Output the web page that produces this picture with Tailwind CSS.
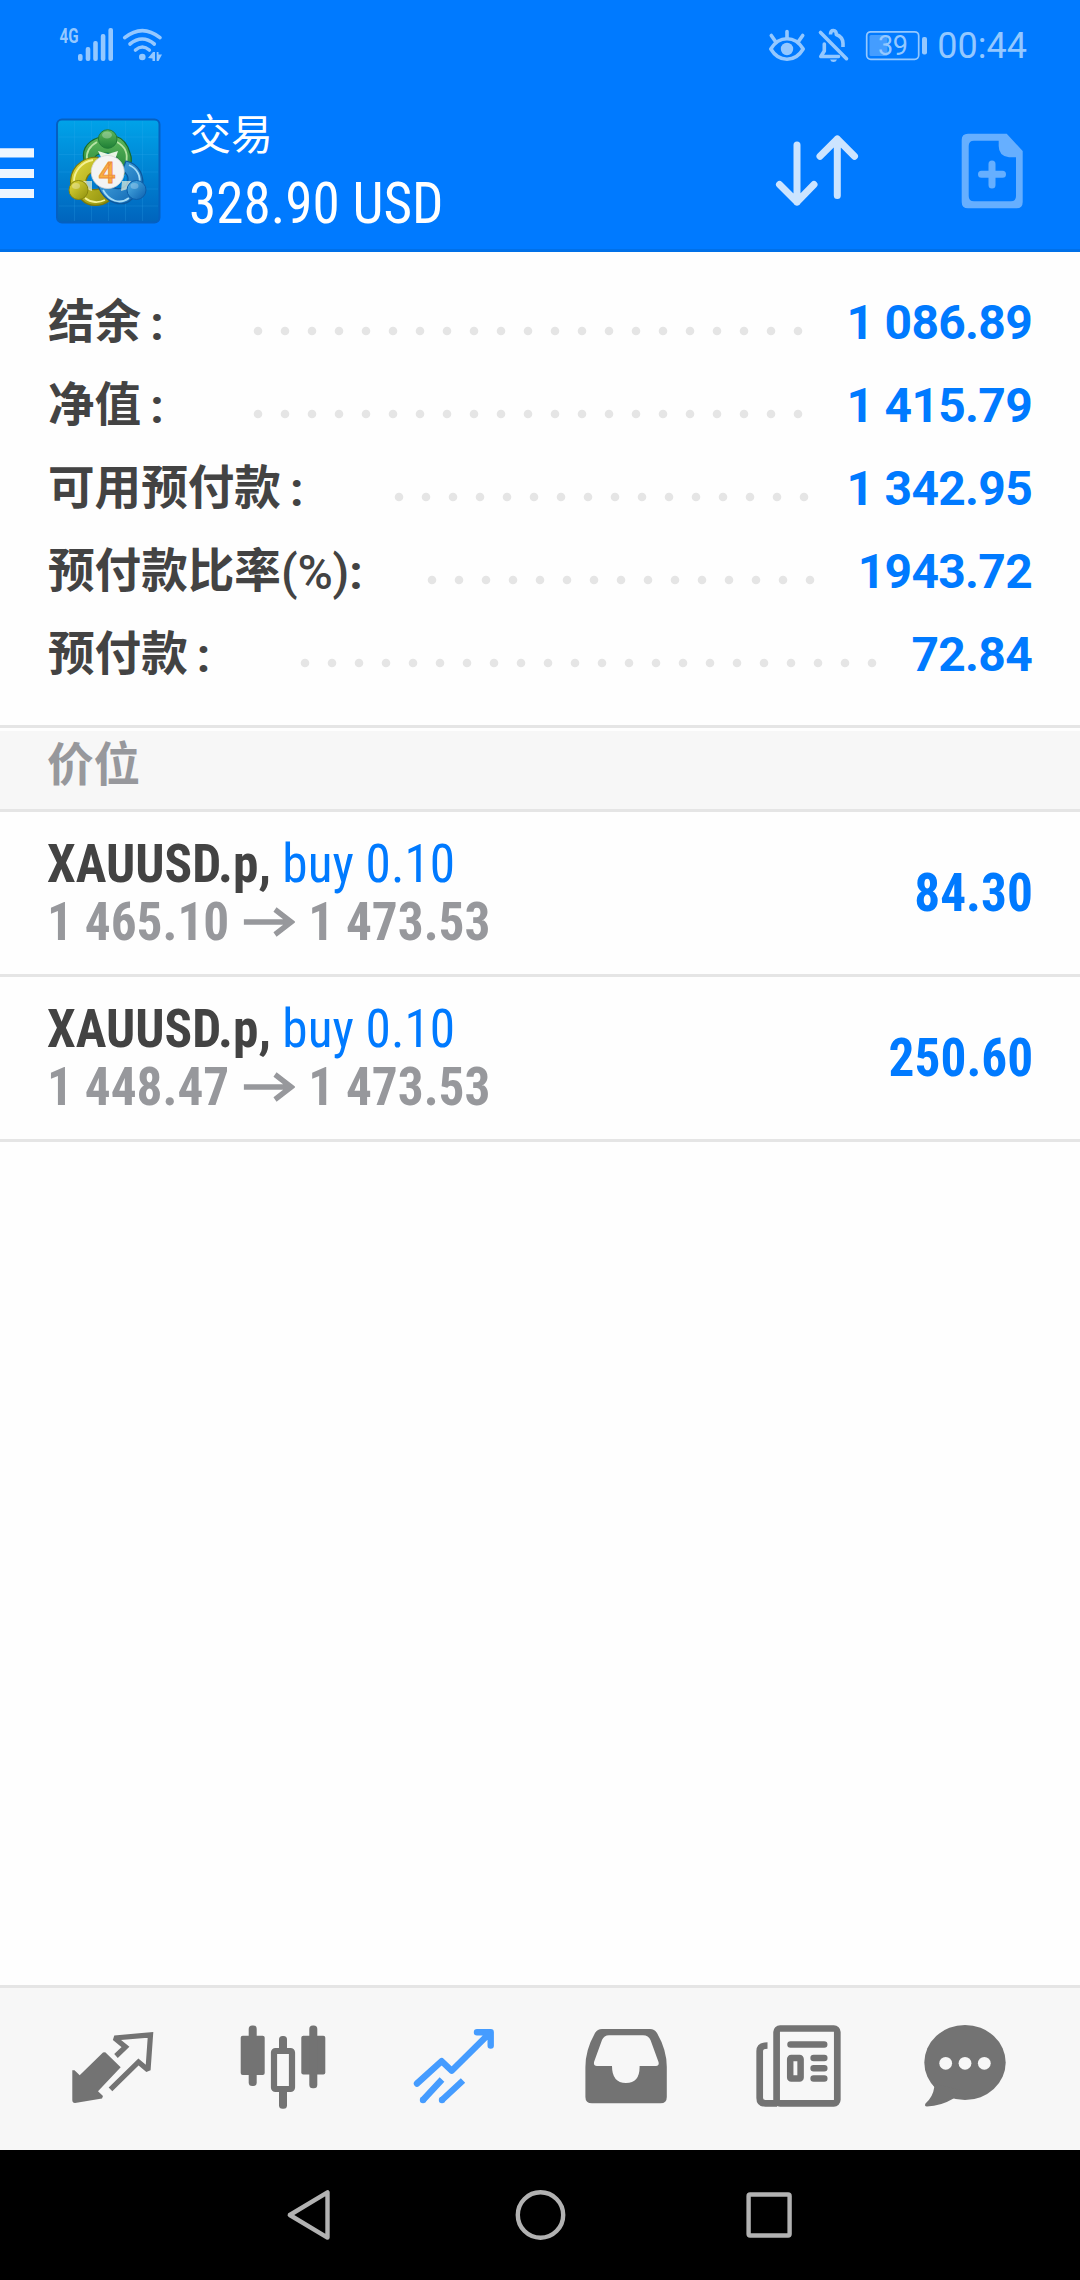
<!DOCTYPE html>
<html lang="zh-CN">
<head>
  <meta charset="UTF-8">
  <meta name="viewport" content="width=device-width, initial-scale=1.0">
  <title>交易</title>
  <script src="https://cdn.jsdelivr.net/npm/@tailwindcss/browser@4"></script>
</head>
<body class="bg-[#fefefe] font-['Roboto','Noto_Sans_CJK_SC',sans-serif] w-[1080px] h-[2280px] flex flex-col overflow-hidden">

  <!-- Header -->
  <header class="bg-[#007aff] h-[252px] border-b-3 border-[#0070e8] flex flex-col shrink-0">

    <!-- Status bar -->
    <div class="h-[92px] flex items-center text-[#94c8ff]">
      <svg class="w-[170px] h-[92px]" viewBox="0 0 170 92" fill="currentColor">
        <text x="59.5" y="43" font-size="21" font-weight="700" textLength="19" lengthAdjust="spacingAndGlyphs">4G</text>
        <rect x="78" y="54" width="4.6" height="7" rx="2"/>
        <rect x="85.7" y="47" width="4.6" height="14" rx="2"/>
        <rect x="93.2" y="41" width="4.6" height="20" rx="2"/>
        <rect x="100.8" y="34" width="4.6" height="27" rx="2"/>
        <rect x="108.4" y="28" width="4.6" height="33" rx="2"/>
        <g fill="none" stroke="currentColor" stroke-width="3.6" stroke-linecap="round">
          <path d="M124.7 37.7Q142.3 23.5 160 37.7"/>
          <path d="M130 44Q142.3 34 154.3 44"/>
          <path d="M135.5 50Q142.3 44 149.3 50"/>
        </g>
        <circle cx="142.3" cy="57" r="3.3"/>
        <path d="M148 58L153 52H155V61H152.5V58.5ZM156.7 52H158.5V54.5H162L158.5 61H156.7Z"/>
      </svg>
      <svg class="w-[168px] h-[92px] ml-auto" viewBox="763 0 168 92" fill="none" stroke="currentColor" stroke-width="3.6" stroke-linecap="round" stroke-linejoin="round">
        <path d="M770.8 49Q777 38.8 787 38.8T803.2 49Q797 59.3 787 59.3T770.8 49Z"/>
        <circle cx="787" cy="49" r="6.2" fill="currentColor" stroke="none"/>
        <path d="M787 31.5V38M771.3 35.5L775.5 41.5M802.7 35.5L798.5 41.5"/>
        <path d="M820.5 32.5L846.5 58.7"/>
        <path d="M824.3 44V51L820.8 56.5H838.5"/>
        <path d="M830.5 34.5Q830.5 30.5 833.4 30.5T836.3 34.5Q843 37 843 43.5V47" stroke-linecap="butt"/>
        <path d="M830 59.5H837Q836 62 833.5 62T830 59.5Z" fill="currentColor" stroke="none"/>
        <rect x="866.7" y="31.8" width="52" height="27.5" rx="4" stroke-width="1.7"/>
        <rect x="869.5" y="35" width="18" height="21" rx="1.5" fill="#449dff" stroke="none"/>
        <rect x="922" y="37" width="5" height="17.5" rx="2" fill="currentColor" stroke="none"/>
        <text x="878" y="55" font-size="27" fill="currentColor" stroke="none" textLength="30">39</text>
      </svg>
      <div class="text-[36px] leading-none ml-[6px] mr-[53px]">00:44</div>
    </div>

    <!-- Title bar -->
    <div class="flex h-[157px]">
      <svg class="w-[168px] h-[157px]" viewBox="0 92 168 157">
        <defs>
          <linearGradient id="tile" x1="0" y1="0" x2="0" y2="1">
            <stop offset="0" stop-color="#00a3e9"/>
            <stop offset="1" stop-color="#0064bd"/>
          </linearGradient>
          <linearGradient id="green" x1="0" y1="0" x2="0" y2="1">
            <stop offset="0" stop-color="#5fb95c"/>
            <stop offset="1" stop-color="#1e7f35"/>
          </linearGradient>
          <linearGradient id="yellow" x1="0" y1="0" x2="1" y2="1">
            <stop offset="0" stop-color="#e6dc3c"/>
            <stop offset="1" stop-color="#8d8f0c"/>
          </linearGradient>
          <linearGradient id="blue" x1="0" y1="0" x2="1" y2="1">
            <stop offset="0" stop-color="#52b4e8"/>
            <stop offset="1" stop-color="#0a5fae"/>
          </linearGradient>
        </defs>
        <path d="M0 148.3H34V157.5H0ZM0 169H34V178H0ZM0 189H34V198H0Z" fill="#eef6ff"/>
        <rect x="57" y="119.5" width="102.5" height="103" rx="5" fill="url(#tile)" stroke="#0560c0" stroke-width="2"/>
        <path d="M74.5 121V221M91.5 121V221M108.5 121V221M125.5 121V221M142.5 121V221M59 137H158M59 154.5H158M59 172H158M59 189H158M59 206H158" stroke="#35aef0" stroke-opacity=".2" fill="none"/>
        <!-- three figures -->
        <path d="M100 137C84 142 81 153 85 163L96 167C92 157 95 153 107 153C118 153 122 163 116 177C128 176 134 163 130 153C127 142 122 138 115 136Z" fill="url(#green)" stroke="#176a2c" stroke-width="1.2"/>
        <path d="M97 142C88 147 86 153 87 160M117 142C126 147 128 155 126 163" stroke="#b6e3a4" stroke-width="1.8" fill="none"/>
        <path d="M98 157C80 157 68 170 71 187L82 200C88 207 101 207 109 201L104 187C92 193 86 188 86 180C88 173 94 171 98 171Z" fill="url(#yellow)" stroke="#7b780b" stroke-width="1.2"/>
        <path d="M93 160C81 162 74 172 74 181M85 198C91 203 99 203 105 200" stroke="#f4f193" stroke-width="1.8" fill="none"/>
        <path d="M126 161C140 164 145 177 142 189L132 199C123 208 105 204 98 186L109 185C114 190 124 190 127 184C130 177 126 172 122 171Z" fill="url(#blue)" stroke="#0b579d" stroke-width="1.2"/>
        <path d="M129 165C138 169 141 177 139 184M103 190C109 201 120 205 129 198" stroke="#a5dcf7" stroke-width="1.8" fill="none"/>
        <path d="M83 181L92 181V191L86 189ZM122 181L131 181L128 189L121 191Z" fill="#e9f2dc" fill-opacity=".7"/>
        <path d="M98 151L108 154L118 151L116 157H101Z" fill="#e9f5e4"/>
        <circle cx="107.7" cy="139" r="9.3" fill="url(#green)" stroke="#227c38"/>
        <circle cx="78.5" cy="190" r="9.5" fill="url(#yellow)" stroke="#86850e"/>
        <circle cx="136.5" cy="190" r="9.5" fill="url(#blue)" stroke="#0c5ca8"/>
        <ellipse cx="107" cy="135" rx="5" ry="3.5" fill="#fff" fill-opacity=".28"/>
        <ellipse cx="76" cy="186" rx="4" ry="3" fill="#fff" fill-opacity=".3"/>
        <ellipse cx="134.5" cy="186" rx="4" ry="3" fill="#fff" fill-opacity=".25"/>
        <circle cx="107.7" cy="172" r="16.5" fill="#f4f4f4" stroke="#d5d5d5" stroke-width=".8"/>
        <text x="107" y="182.5" font-size="30" font-weight="500" text-anchor="middle" fill="#fbb040" stroke="#ea8a3c" stroke-width=".8">4</text>
      </svg>
      <div class="flex flex-col text-white pl-[21px] pt-[23px]">
        <div class="text-[42px] leading-[42px]">交易</div>
        <div class="text-[57.5px] leading-[66px] mt-[14px] font-['Roboto_Condensed','Roboto',sans-serif] font-stretch-condensed whitespace-nowrap origin-left scale-x-[0.96]">328.90 USD</div>
      </div>
      <div class="flex ml-auto">
        <svg class="w-[90px] h-[157px]" viewBox="772 92 90 157" fill="none" stroke="#cce4ff" stroke-width="7" stroke-linecap="round" stroke-linejoin="round">
          <path d="M797 145V202M779.5 184.5L797 202L814 184.5"/>
          <path d="M837.3 195.5V139M820 156.3L837.3 139L854.5 156.3"/>
        </svg>
        <svg class="w-[80px] h-[157px] ml-[90px] mr-[48px]" viewBox="952 92 80 157" fill="#66afff">
          <path fill-rule="evenodd" d="M968 133.7H1006.7L1022.7 151V202Q1022.7 208.3 1016.5 208.3H968Q961.7 208.3 961.7 202V140Q961.7 133.7 968 133.7ZM974 140.7Q968.7 140.7 968.7 146V196Q968.7 201.3 974 201.3H1011Q1016 201.3 1016 196V157.3H1009Q998.7 156 998.7 146V140.7Z"/>
          <path d="M992 164V185M981.5 174.3H1002.5" stroke="#66afff" stroke-width="7" stroke-linecap="round"/>
        </svg>
      </div>
    </div>
  </header>

  <!-- Account summary -->
  <section class="h-[476px] shrink-0 pt-[29px] px-[48px] border-b-3 border-[#e5e5e5] text-[#434343] text-[46.6px] font-bold">
    <div class="flex items-center h-[83px]">
      <div class="w-[205px] flex pt-[3px]"><span>结余</span><span class="ml-[9px] text-[48px]">:</span></div>
      <svg class="w-[550px] h-[10px] mt-[17px]" viewBox="0 0 550 10"><path d="M5 5H546" stroke="#e5e5e5" stroke-width="8.6" stroke-linecap="round" stroke-dasharray="0 27"/></svg>
      <div class="ml-auto text-[48px] tracking-[-0.7px] text-[#007aff] whitespace-nowrap">1 086.89</div>
    </div>
    <div class="flex items-center h-[83px]">
      <div class="w-[205px] flex pt-[3px]"><span>净值</span><span class="ml-[9px] text-[48px]">:</span></div>
      <svg class="w-[550px] h-[10px] mt-[17px]" viewBox="0 0 550 10"><path d="M5 5H546" stroke="#e5e5e5" stroke-width="8.6" stroke-linecap="round" stroke-dasharray="0 27"/></svg>
      <div class="ml-auto text-[48px] tracking-[-0.7px] text-[#007aff] whitespace-nowrap">1 415.79</div>
    </div>
    <div class="flex items-center h-[83px]">
      <div class="w-[346px] flex pt-[3px]"><span>可用预付款</span><span class="ml-[9px] text-[48px]">:</span></div>
      <svg class="w-[415px] h-[10px] mt-[17px]" viewBox="0 0 415 10"><path d="M5 5H411" stroke="#e5e5e5" stroke-width="8.6" stroke-linecap="round" stroke-dasharray="0 27"/></svg>
      <div class="ml-auto text-[48px] tracking-[-0.7px] text-[#007aff] whitespace-nowrap">1 342.95</div>
    </div>
    <div class="flex items-center h-[83px]">
      <div class="w-[379px] flex pt-[3px] whitespace-nowrap"><span>预付款比率</span><span class="text-[48px] font-medium tracking-[-0.2px]">(%)</span><span class="text-[48px]">:</span></div>
      <svg class="w-[388px] h-[10px] mt-[17px]" viewBox="0 0 388 10"><path d="M5 5H384" stroke="#e5e5e5" stroke-width="8.6" stroke-linecap="round" stroke-dasharray="0 27"/></svg>
      <div class="ml-auto text-[48px] tracking-[-0.7px] text-[#007aff] whitespace-nowrap">1943.72</div>
    </div>
    <div class="flex items-center h-[83px]">
      <div class="w-[252px] flex pt-[3px]"><span>预付款</span><span class="ml-[9px] text-[48px]">:</span></div>
      <svg class="w-[577px] h-[10px] mt-[17px]" viewBox="0 0 577 10"><path d="M5 5H573" stroke="#e5e5e5" stroke-width="8.6" stroke-linecap="round" stroke-dasharray="0 27"/></svg>
      <div class="ml-auto text-[48px] tracking-[-0.7px] text-[#007aff] whitespace-nowrap">72.84</div>
    </div>
  </section>

  <!-- Positions -->
  <div class="mt-[3px] h-[81px] shrink-0 bg-[#f7f7f7] border-b-3 border-[#e5e5e5] pl-[47px] text-[46.6px] leading-[69px] font-bold text-[#97989c]">价位</div>

  <div class="h-[165px] shrink-0 border-b-3 border-[#e5e5e5] pl-[47px] pr-[47px] flex items-center font-['Roboto_Condensed','Roboto',sans-serif] font-stretch-condensed text-[54px] leading-[58px] whitespace-nowrap">
    <div class="origin-left scale-x-[0.95]">
      <div class="flex gap-[12px]"><span class="font-bold text-[#434343]">XAUUSD.p,</span><span class="text-[#007aff]">buy 0.10</span></div>
      <div class="flex items-center font-bold text-[#97989c]">
        <span>1 465.10</span>
        <svg class="w-[54px] h-[30px] ml-[15px] mr-[14px]" viewBox="0 0 54 30" fill="none" stroke="currentColor" stroke-width="5.5"><path d="M0 15H50M33 2.5L50 15L33 27.5"/></svg>
        <span>1 473.53</span>
      </div>
    </div>
    <div class="ml-auto font-bold text-[#007aff] origin-right scale-x-[0.95]">84.30</div>
  </div>
  <div class="h-[165px] shrink-0 border-b-3 border-[#e5e5e5] pl-[47px] pr-[47px] flex items-center font-['Roboto_Condensed','Roboto',sans-serif] font-stretch-condensed text-[54px] leading-[58px] whitespace-nowrap">
    <div class="origin-left scale-x-[0.95]">
      <div class="flex gap-[12px]"><span class="font-bold text-[#434343]">XAUUSD.p,</span><span class="text-[#007aff]">buy 0.10</span></div>
      <div class="flex items-center font-bold text-[#97989c]">
        <span>1 448.47</span>
        <svg class="w-[54px] h-[30px] ml-[15px] mr-[14px]" viewBox="0 0 54 30" fill="none" stroke="currentColor" stroke-width="5.5"><path d="M0 15H50M33 2.5L50 15L33 27.5"/></svg>
        <span>1 473.53</span>
      </div>
    </div>
    <div class="ml-auto font-bold text-[#007aff] origin-right scale-x-[0.95]">250.60</div>
  </div>

  <!-- Tab bar -->
  <nav class="mt-auto h-[165px] shrink-0 bg-[#f7f7f7] border-t-3 border-[#e5e5e5] px-[27px] grid grid-cols-6 justify-items-center text-[#737373]">
    <svg class="w-[101px] h-[162px]" viewBox="62 1988 101 162" fill="currentColor">
      <path d="M105 2052L120.7 2067.3L98 2091.3L103 2096L102 2098.5L75 2103Q72.3 2103 72.3 2100V2070.3L74.5 2070.3L79.7 2075.3L103 2052.5Q105 2051.5 107 2053.5Z"/>
      <path d="M116 2056L125.5 2047L114.5 2038L150.5 2034.8L148 2070L138.5 2062L110.5 2089.3" fill="none" stroke="currentColor" stroke-width="5.2" stroke-miterlimit="2"/>
    </svg>
    <svg class="w-[101px] h-[162px]" viewBox="233 1988 101 162" fill="currentColor">
      <rect x="240.7" y="2035.7" width="24" height="39.3" rx="2"/>
      <rect x="248.7" y="2025.5" width="8" height="60.5" rx="3.5"/>
      <rect x="301.3" y="2035.7" width="24" height="38.8" rx="2"/>
      <rect x="309.3" y="2025.5" width="8" height="62.8" rx="3.5"/>
      <rect x="279" y="2036" width="8" height="18" rx="3.5"/>
      <rect x="279" y="2087" width="8" height="21.7" rx="3.5"/>
      <rect x="274" y="2051" width="18" height="38" rx="1.5" fill="none" stroke="currentColor" stroke-width="6.2"/>
    </svg>
    <svg class="w-[101px] h-[162px]" viewBox="404 1988 101 162" fill="none" stroke="#459cff" stroke-width="6.4">
      <path d="M417 2083.5L441.7 2061.2L451.7 2070.7L490.3 2032.5M477 2032.3H490.7V2045.5" stroke-linecap="round" stroke-linejoin="round"/>
      <path d="M423 2100L442 2079.5M442 2100L463 2080.5"/>
      <g fill="#459cff" stroke="none"><circle cx="423" cy="2100" r="3.2"/><circle cx="442" cy="2100" r="3.2"/></g>
    </svg>
    <svg class="w-[101px] h-[162px]" viewBox="575 1988 101 162" fill="currentColor">
      <path fill-rule="evenodd" d="M602 2029H650Q654.5 2029 657 2033Q666.8 2050 666.8 2067V2097Q666.8 2103.3 660.5 2103.3H592Q585.4 2103.3 585.4 2097V2067Q585.4 2050 595 2033Q597.5 2029 602 2029ZM609 2035.3Q604 2035.3 602 2040L594.2 2061.5Q593 2066 597 2066H612Q612 2083 626 2083T639.6 2066H656Q659.5 2066 658.5 2062L650.5 2040Q648.5 2035.3 643 2035.3Z"/>
    </svg>
    <svg class="w-[101px] h-[162px]" viewBox="746 1988 101 162" fill="none" stroke="currentColor" stroke-width="6.7">
      <rect x="776.6" y="2028.5" width="60.7" height="74.8" rx="3.5"/>
      <path d="M767.5 2045.5Q759.7 2045.5 759.7 2051V2098Q759.7 2103.4 765.5 2103.4H777"/>
      <rect x="790.2" y="2058" width="10.4" height="20.5" rx="1" stroke-width="6.5"/>
      <path d="M790.5 2044.5H824.2M813.6 2058H824.3M813.6 2068.2H824.3M813.6 2078.4H824.3" stroke-linecap="round" stroke-width="6.5"/>
    </svg>
    <svg class="w-[101px] h-[162px]" viewBox="917 1988 101 162" fill="currentColor">
      <ellipse cx="965" cy="2062.5" rx="40.7" ry="37.5"/>
      <path d="M932 2083L934.3 2087Q933 2097 925.5 2103.5Q924 2106.5 927 2106.5Q941 2106 953.5 2098.5L960 2090Z"/>
      <g fill="#f7f7f7"><circle cx="945.7" cy="2063.3" r="6.4"/><circle cx="965" cy="2063.3" r="6.4"/><circle cx="984.3" cy="2063.3" r="6.4"/></g>
    </svg>
  </nav>

  <!-- System navigation -->
  <div class="h-[130px] shrink-0 bg-black flex items-center justify-between pl-[284px] pr-[285px]">
    <svg class="w-[50px] h-[60px]" viewBox="284 2185 50 60" fill="none" stroke="#b2b2b2" stroke-width="4.4" stroke-linejoin="round"><path d="M289.8 2215L327.5 2192.4V2237.6Z"/></svg>
    <svg class="w-[60px] h-[60px]" viewBox="508.5 2185 60 60" fill="none" stroke="#b2b2b2" stroke-width="4.4"><circle cx="540" cy="2215" r="22.7"/></svg>
    <svg class="w-[52px] h-[60px]" viewBox="743 2185 52 60" fill="none" stroke="#b2b2b2" stroke-width="4.4"><rect x="748.6" y="2194.5" width="41" height="41" rx="1.5"/></svg>
  </div>
</body>
</html>
